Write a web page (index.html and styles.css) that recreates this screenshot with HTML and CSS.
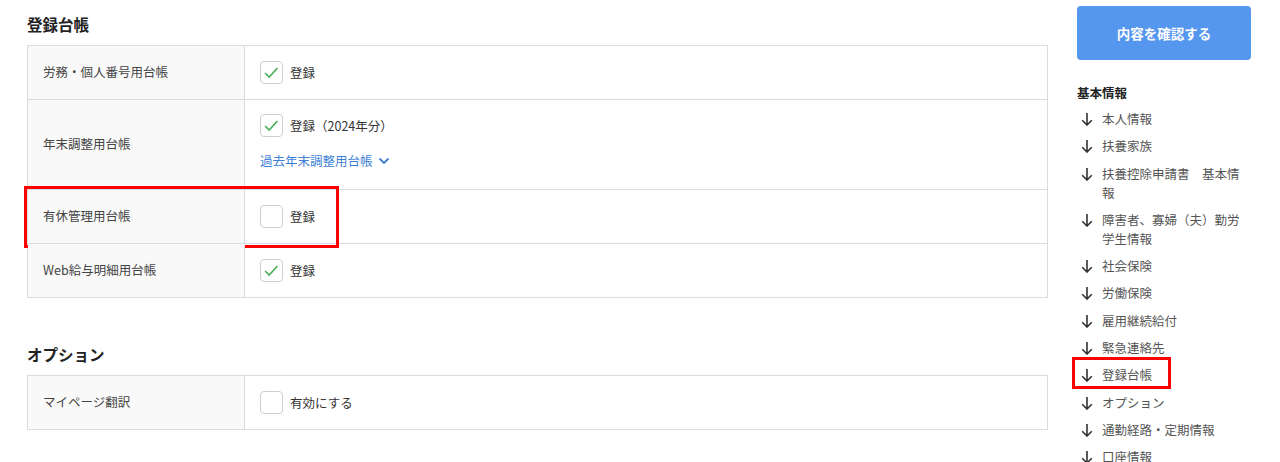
FILE: index.html
```html
<!DOCTYPE html>
<html>
<head>
	<title>登録台帳</title>
	<link rel="stylesheet" href="styles.css">
</head>
<body>
	<div class="page">
		<div class="main">
			<h2 class="sec-title">登録台帳</h2>
			<div class="table">
				<div class="row">
					<div class="label">労務・個人番号用台帳</div>
					<div class="value">
						<label class="check"><span class="box on"><svg viewBox="0 0 23 23"><polyline points="4.5,12 9,16.5 18,6.5"/></svg></span>登録</label>
					</div>
				</div>
				<div class="row">
					<div class="label">年末調整用台帳</div>
					<div class="value tall">
						<label class="check"><span class="box on"><svg viewBox="0 0 23 23"><polyline points="4.5,12 9,16.5 18,6.5"/></svg></span>登録（2024年分）</label>
						<a class="past">過去年末調整用台帳<svg viewBox="0 0 12 8"><polyline points="1.5,1.5 6,6 10.5,1.5"/></svg></a>
					</div>
				</div>
				<div class="row marked">
					<div class="label">有休管理用台帳</div>
					<div class="value">
						<label class="check"><span class="box"></span>登録</label>
					</div>
					<div class="redbox main-red"></div>
				</div>
				<div class="row">
					<div class="label">Web給与明細用台帳</div>
					<div class="value">
						<label class="check"><span class="box on"><svg viewBox="0 0 23 23"><polyline points="4.5,12 9,16.5 18,6.5"/></svg></span>登録</label>
					</div>
				</div>
			</div>

			<h2 class="sec-title opt">オプション</h2>
			<div class="table">
				<div class="row">
					<div class="label">マイページ翻訳</div>
					<div class="value">
						<label class="check"><span class="box"></span>有効にする</label>
					</div>
				</div>
			</div>
		</div>

		<div class="side">
			<button class="confirm">内容を確認する</button>
			<div class="nav-title">基本情報</div>
			<ul class="nav">
				<li><svg class="arr" viewBox="0 0 12 14"><path d="M6 1v12M1.2 8.2L6 13l4.8-4.8"/></svg><span>本人情報</span></li>
				<li><svg class="arr" viewBox="0 0 12 14"><path d="M6 1v12M1.2 8.2L6 13l4.8-4.8"/></svg><span>扶養家族</span></li>
				<li><svg class="arr" viewBox="0 0 12 14"><path d="M6 1v12M1.2 8.2L6 13l4.8-4.8"/></svg><span>扶養控除申請書　基本情報</span></li>
				<li><svg class="arr" viewBox="0 0 12 14"><path d="M6 1v12M1.2 8.2L6 13l4.8-4.8"/></svg><span>障害者、寡婦（夫）勤労学生情報</span></li>
				<li><svg class="arr" viewBox="0 0 12 14"><path d="M6 1v12M1.2 8.2L6 13l4.8-4.8"/></svg><span>社会保険</span></li>
				<li><svg class="arr" viewBox="0 0 12 14"><path d="M6 1v12M1.2 8.2L6 13l4.8-4.8"/></svg><span>労働保険</span></li>
				<li><svg class="arr" viewBox="0 0 12 14"><path d="M6 1v12M1.2 8.2L6 13l4.8-4.8"/></svg><span>雇用継続給付</span></li>
				<li><svg class="arr" viewBox="0 0 12 14"><path d="M6 1v12M1.2 8.2L6 13l4.8-4.8"/></svg><span>緊急連絡先</span></li>
				<li class="marked"><svg class="arr" viewBox="0 0 12 14"><path d="M6 1v12M1.2 8.2L6 13l4.8-4.8"/></svg><span>登録台帳</span><div class="redbox side-red"></div></li>
				<li><svg class="arr" viewBox="0 0 12 14"><path d="M6 1v12M1.2 8.2L6 13l4.8-4.8"/></svg><span>オプション</span></li>
				<li><svg class="arr" viewBox="0 0 12 14"><path d="M6 1v12M1.2 8.2L6 13l4.8-4.8"/></svg><span>通勤経路・定期情報</span></li>
				<li><svg class="arr" viewBox="0 0 12 14"><path d="M6 1v12M1.2 8.2L6 13l4.8-4.8"/></svg><span>口座情報</span></li>
			</ul>
		</div>
	</div>
</body>
</html>
```

FILE: styles.css
```css
body {
	margin: 0;
	background: #fff;
	font-family: "Noto Sans CJK JP", "Noto Sans", sans-serif;
	color: #333;
	overflow: hidden;
}
.page {
	display: flex;
	height: 462px;
}
.main {
	width: 1021px;
	padding-left: 27px;
	padding-top: 14px;
}
.sec-title {
	margin: 0 0 10px 0;
	font-size: 15.5px;
	line-height: 21px;
	font-weight: bold;
	color: #222;
}
.sec-title.opt {
	margin-top: 46px;
}
.table {
	border: 1px solid #dcdcdc;
	border-bottom: none;
}
.row {
	display: flex;
	height: 54px;
	box-sizing: border-box;
	border-bottom: 1px solid #dcdcdc;
	position: relative;
}
.row.tall-row {
	height: 90px;
}
.label {
	width: 201px;
	padding-left: 15px;
	padding-bottom: 2px;
	box-sizing: content-box;
	background: #f9f9f9;
	border-right: 1px solid #dcdcdc;
	display: flex;
	align-items: center;
	font-size: 12.5px;
	color: #444;
}
.value {
	flex: 1;
	padding-left: 15px;
	padding-bottom: 1px;
	display: flex;
	align-items: center;
}
.row:has(.tall) {
	height: 90px;
}
.value.tall {
	flex-direction: column;
	align-items: flex-start;
	justify-content: flex-start;
	padding-top: 14px;
}
.check {
	display: flex;
	align-items: center;
	font-size: 12.5px;
	color: #333;
}
.box {
	width: 21px;
	height: 21px;
	border: 1px solid #cfcfcf;
	border-radius: 4px;
	background: #fff;
	margin-right: 7px;
	display: inline-block;
}
.box svg {
	width: 21px;
	height: 21px;
	display: block;
}
.box polyline {
	fill: none;
	stroke: #4cae5a;
	stroke-width: 1.8;
}
.past {
	margin-top: 14px;
	font-size: 12.5px;
	color: #3d7fd6;
	display: flex;
	align-items: center;
}
.past svg {
	width: 12px;
	height: 8px;
	margin-left: 5px;
}
.past polyline {
	fill: none;
	stroke: #3d7fd6;
	stroke-width: 1.8;
}
.redbox {
	position: absolute;
	border: 3px solid #ff0000;
	box-sizing: border-box;
}
.main-red {
	left: -4px;
	top: -4px;
	width: 315px;
	height: 62px;
}

.side {
	width: 174px;
	margin-left: 29px;
	padding-top: 6px;
}
.confirm {
	display: block;
	width: 174px;
	height: 54px;
	border: none;
	border-radius: 4px;
	background: #5596ee;
	color: #fff;
	font-family: "Noto Sans CJK JP", sans-serif;
	font-size: 13.5px;
	font-weight: bold;
}
.nav-title {
	margin-top: 23px;
	font-size: 12.5px;
	font-weight: bold;
	color: #222;
	line-height: 19px;
}
.nav {
	list-style: none;
	margin: 7px 0 0 0;
	padding: 0 0 0 4px;
}
.nav li {
	display: flex;
	align-items: flex-start;
	font-size: 12.5px;
	line-height: 19px;
	color: #555;
	margin-bottom: 8.3px;
	position: relative;
}
.nav .arr {
	width: 12px;
	height: 14px;
	flex: none;
	margin: 3px 9px 0 0;
}
.nav .arr path {
	fill: none;
	stroke: #333;
	stroke-width: 1.6;
}
.side-red {
	left: -9px;
	top: -8px;
	width: 99px;
	height: 32px;
}
```
